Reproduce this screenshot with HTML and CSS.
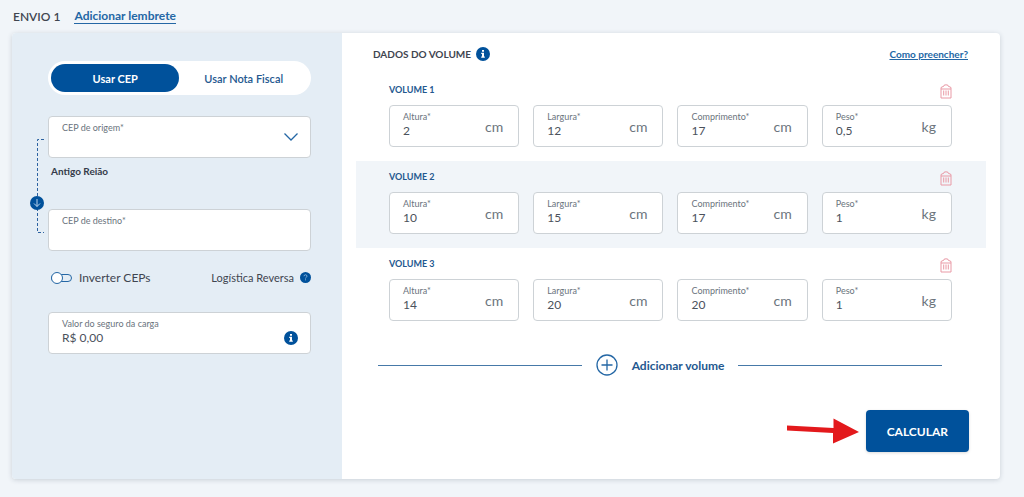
FILE: index.html
```html
<!DOCTYPE html>
<html lang="pt-BR">
<head>
<meta charset="utf-8">
<meta name="viewport" content="width=device-width, initial-scale=1">
<title>Envio 1</title>
<link rel="stylesheet" href="styles.css">
</head>
<body>
<svg class="sprite" aria-hidden="true">
  <symbol id="info" viewBox="0 0 14 14"><circle cx="7" cy="7" r="7" fill="#00519b"/><path d="M6 3h2v1.800H6zM5.200 5.800H8v3.700h.8v1.200H5.200V9.500H6V7h-.8z" fill="#fff"/></symbol>
  <symbol id="trash" viewBox="0 0 12 15"><path d="M1 5V3.500L4 2 4.500.900h3L8 2l3 1.500V5zM1 5v9h10V5M3.700 6.500v5M6 6.500v5M8.300 6.500v5" fill="none" stroke="#e99aa6"/></symbol>
</svg>
<header class="top">
  <h1 class="top-title">ENVIO 1</h1>
  <a class="top-link" href="#">Adicionar lembrete</a>
</header>
<main class="card">
  <section class="origin">
    <div class="tabs">
      <button class="tab tab-active" type="button">Usar CEP</button>
      <button class="tab" type="button">Usar Nota Fiscal</button>
    </div>
    <div class="route">
      <svg class="route-line" width="18" height="98" viewBox="0 0 18 98" aria-hidden="true">
        <path d="M14 2.500H7.500V95.500H14" fill="none" stroke="#2c62a0" stroke-dasharray="3 2"/>
        <circle cx="7" cy="66" r="7" fill="#00519b"/>
        <path d="M7 62v7.500M4 66.500l3 3 3-3" fill="none" stroke="#b9d5ee"/>
      </svg>
      <div class="route-fields">
        <div class="field">
          <div class="field-text">
            <label class="field-label" for="from">CEP de origem*</label>
            <select class="field-input" id="from"><option></option></select>
          </div>
          <svg class="chevron" width="14" height="8" viewBox="0 0 14 8" aria-hidden="true"><path d="M.5.500 7 7 13.500.500" fill="none" stroke="#2467a5" stroke-width="1.300"/></svg>
        </div>
        <p class="place">Antigo Reião</p>
        <div class="field">
          <div class="field-text">
            <label class="field-label" for="to">CEP de destino*</label>
            <input class="field-input" id="to" type="text">
          </div>
        </div>
      </div>
    </div>
    <div class="options">
      <label class="switch"><input class="switch-input" type="checkbox">Inverter CEPs</label>
      <span class="reverse">Logística Reversa
        <svg width="11" height="11" viewBox="0 0 11 11" aria-hidden="true"><circle cx="5.500" cy="5.500" r="5.500" fill="#00519b"/><path d="M4 4.200c0-1.900 3-1.900 3 0 0 1.100-1.500 1-1.500 2.300M5.500 7.300v1" fill="none" stroke="#8fb9df" stroke-width=".9"/></svg>
      </span>
    </div>
    <div class="field">
      <div class="field-text">
        <label class="field-label" for="insurance">Valor do seguro da carga</label>
        <input class="field-input" id="insurance" type="text" value="R$ 0,00">
      </div>
      <svg class="field-info" width="14" height="14" aria-hidden="true"><use href="#info"/></svg>
    </div>
  </section>
  <section class="volumes">
    <div class="volumes-head">
      <h2 class="volumes-title">DADOS DO VOLUME <svg width="14" height="14" aria-hidden="true"><use href="#info"/></svg></h2>
      <a class="help-link" href="#">Como preencher?</a>
    </div>
    <section class="volume">
      <div class="volume-head"><h3 class="volume-title">VOLUME 1</h3><button class="remove" type="button" aria-label="Remover volume 1"><svg width="12" height="15"><use href="#trash"/></svg></button></div>
      <div class="measures">
        <div class="field"><div class="field-text"><label class="field-label" for="a1">Altura*</label><input class="field-input" id="a1" type="text" value="2"></div><span class="unit">cm</span></div>
        <div class="field"><div class="field-text"><label class="field-label" for="l1">Largura*</label><input class="field-input" id="l1" type="text" value="12"></div><span class="unit">cm</span></div>
        <div class="field"><div class="field-text"><label class="field-label" for="c1">Comprimento*</label><input class="field-input" id="c1" type="text" value="17"></div><span class="unit">cm</span></div>
        <div class="field"><div class="field-text"><label class="field-label" for="p1">Peso*</label><input class="field-input" id="p1" type="text" value="0,5"></div><span class="unit">kg</span></div>
      </div>
    </section>
    <section class="volume volume-alt">
      <div class="volume-head"><h3 class="volume-title">VOLUME 2</h3><button class="remove" type="button" aria-label="Remover volume 2"><svg width="12" height="15"><use href="#trash"/></svg></button></div>
      <div class="measures">
        <div class="field"><div class="field-text"><label class="field-label" for="a2">Altura*</label><input class="field-input" id="a2" type="text" value="10"></div><span class="unit">cm</span></div>
        <div class="field"><div class="field-text"><label class="field-label" for="l2">Largura*</label><input class="field-input" id="l2" type="text" value="15"></div><span class="unit">cm</span></div>
        <div class="field"><div class="field-text"><label class="field-label" for="c2">Comprimento*</label><input class="field-input" id="c2" type="text" value="17"></div><span class="unit">cm</span></div>
        <div class="field"><div class="field-text"><label class="field-label" for="p2">Peso*</label><input class="field-input" id="p2" type="text" value="1"></div><span class="unit">kg</span></div>
      </div>
    </section>
    <section class="volume">
      <div class="volume-head"><h3 class="volume-title">VOLUME 3</h3><button class="remove" type="button" aria-label="Remover volume 3"><svg width="12" height="15"><use href="#trash"/></svg></button></div>
      <div class="measures">
        <div class="field"><div class="field-text"><label class="field-label" for="a3">Altura*</label><input class="field-input" id="a3" type="text" value="14"></div><span class="unit">cm</span></div>
        <div class="field"><div class="field-text"><label class="field-label" for="l3">Largura*</label><input class="field-input" id="l3" type="text" value="20"></div><span class="unit">cm</span></div>
        <div class="field"><div class="field-text"><label class="field-label" for="c3">Comprimento*</label><input class="field-input" id="c3" type="text" value="20"></div><span class="unit">cm</span></div>
        <div class="field"><div class="field-text"><label class="field-label" for="p3">Peso*</label><input class="field-input" id="p3" type="text" value="1"></div><span class="unit">kg</span></div>
      </div>
    </section>
    <div class="add">
      <button class="add-button" type="button">
        <svg width="22" height="22" viewBox="0 0 22 22" aria-hidden="true"><path d="M11 5.500v11M5.500 11h11" stroke="#2467a5" stroke-width="1.300"/><circle cx="11" cy="11" r="10" fill="none" stroke="#2467a5" stroke-width="1.300"/></svg>
        Adicionar volume
      </button>
    </div>
    <div class="actions">
      <svg width="72" height="26" viewBox="0 0 72 26" aria-hidden="true"><path d="M0 7.500 46.500 10V.5L72 14 46 25.500V15L0 12.500z" fill="#e3191c"/></svg>
      <button class="submit" type="button">CALCULAR</button>
    </div>
  </section>
</main>
</body>
</html>
```
FILE: styles.css
```css
* { box-sizing: border-box; }
body {
  margin: 0;
  background: #f1f5f9;
  color: #3f4550;
  font-family: Lato, "Open Sans", sans-serif;
  font-size: 12px;
}
h1, h2, h3, p { margin: 0; }
button, input, select { font-family: inherit; }
button { padding: 0; border: 0; background: none; cursor: pointer; }
svg { display: block; flex: none; }
a { color: #2467a5; }
.sprite { position: absolute; width: 0; height: 0; }

.top {
  display: flex;
  align-items: center;
  gap: 14px;
  height: 33px;
  padding: 0 13px 1px;
}
.top-title { font-size: 12px; font-weight: 600; }
.top-link {
  border-bottom: 1px solid #2467a5;
  font-size: 12px;
  font-weight: 700;
  line-height: 15px;
  text-decoration: none;
}

.card {
  display: grid;
  grid-template-columns: minmax(0, 334fr) minmax(0, 666fr);
  margin: 0 24px 18px 12px;
  border-radius: 4px;
  background: #fff;
  box-shadow: 0 1px 5px rgba(40, 60, 80, .2);
}

.origin {
  padding: 28px 31px 27px 36px;
  border-radius: 4px 0 0 4px;
  background: #e4edf5;
}
.tabs {
  display: grid;
  grid-template-columns: 1fr 1fr;
  padding: 3px;
  border-radius: 17px;
  background: #fff;
}
.tab {
  height: 28px;
  border-radius: 14px;
  color: #24588f;
  font-size: 11px;
  font-weight: 600;
}
.tab-active { background: #00519b; color: #fff; font-weight: 700; }

.field {
  display: flex;
  align-items: center;
  height: 42px;
  padding: 0 12px 0 13px;
  border: 1px solid #cdd2d6;
  border-radius: 4px;
  background: #fff;
}
.field-text { flex: 1; min-width: 0; padding-bottom: 3px; }
.field-label {
  display: block;
  color: #6a737d;
  font-size: 9px;
  line-height: 12px;
}
.field-input {
  display: block;
  width: 100%;
  height: 16px;
  padding: 0;
  border: 0;
  outline: 0;
  background: none;
  color: #4b525c;
  font-size: 12px;
  line-height: 16px;
  appearance: none;
}
.unit { margin-right: 3px; color: #6c757d; font-size: 14px; }
.field-info { margin-top: 10px; }

.route {
  display: flex;
  align-items: center;
  margin: 21px 0 0 -18px;
}
.route-line { margin-top: 4px; }
.route-fields { flex: 1; min-width: 0; }
.place {
  height: 51px;
  padding: 6px 3px;
  color: #343b49;
  font-size: 10px;
  font-weight: 700;
  line-height: 14px;
}
.options {
  display: flex;
  align-items: center;
  justify-content: space-between;
  height: 61px;
  padding: 0 0 8px 3px;
}
.switch { display: flex; align-items: center; gap: 7px; font-size: 12px; }
.switch-input {
  display: flex;
  align-items: center;
  width: 21px;
  height: 8px;
  margin: 0;
  border: 1px solid #2467a5;
  border-radius: 4px;
  appearance: none;
}
.switch-input::before {
  content: "";
  flex: none;
  width: 10px;
  height: 10px;
  margin-left: -1px;
  border: 1px solid #2467a5;
  border-radius: 50%;
  background: #fff;
}
.reverse { display: flex; align-items: center; gap: 6px; font-size: 11px; }

.volumes { padding: 12px 14px 27px; }
.volumes-head {
  display: flex;
  align-items: center;
  justify-content: space-between;
  height: 29px;
  padding: 0 18px 11px 17px;
}
.volumes-title {
  display: flex;
  align-items: center;
  gap: 5px;
  font-size: 10px;
  font-weight: 700;
}
.help-link { font-size: 10px; font-weight: 700; }
.volume { padding: 0 34px 14px 33px; }
.volume-alt { background: #f1f5f9; }
.volume-head {
  display: flex;
  align-items: center;
  justify-content: space-between;
  height: 31px;
}
.volume-title { color: #24588f; font-size: 9px; font-weight: 700; }
.remove { padding-top: 4px; }
.measures {
  display: grid;
  grid-template-columns: repeat(4, minmax(0, 1fr));
  gap: 14px;
}
.add {
  display: flex;
  align-items: center;
  gap: 14px;
  margin-top: 19px;
  padding: 0 44px 0 22px;
}
.add::before, .add::after {
  content: "";
  flex: 1;
  height: 1px;
  background: #4679a8;
}
.add-button {
  display: flex;
  align-items: center;
  gap: 14px;
  color: #24588f;
  font-size: 12px;
  font-weight: 700;
}
.actions {
  display: flex;
  align-items: center;
  justify-content: flex-end;
  gap: 7px;
  margin-top: 34px;
  padding-right: 17px;
}
.submit {
  height: 42px;
  padding: 0 21px;
  border-radius: 4px;
  background: #00519b;
  box-shadow: 0 1px 3px rgba(0, 0, 0, .15);
  color: #fff;
  font-size: 12px;
  font-weight: 700;
}
```
